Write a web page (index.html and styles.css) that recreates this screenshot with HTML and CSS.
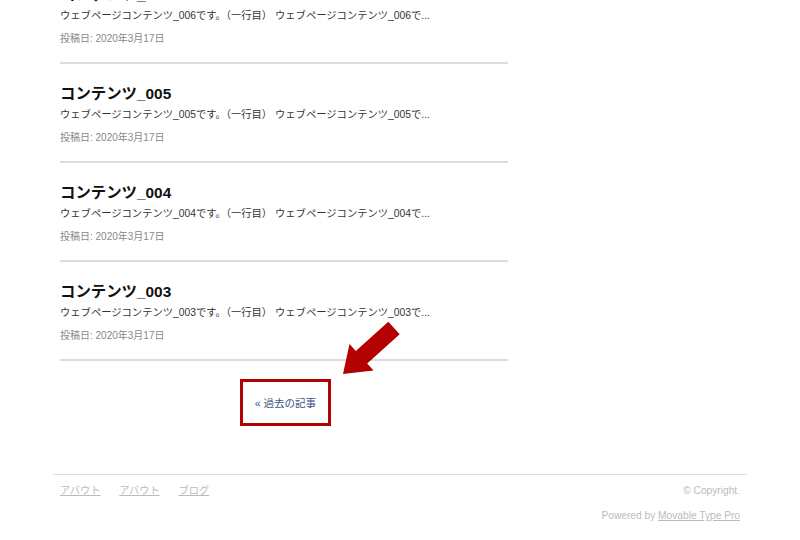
FILE: index.html
```html
<!DOCTYPE html>
<html lang="ja">
<head>
<meta charset="utf-8">
<title>コンテンツ一覧</title>
<link rel="stylesheet" href="styles.css">
</head>
<body>
<main class="main">
  <article class="entry">
    <h2 class="entry-title">コンテンツ_006</h2>
    <p class="entry-excerpt">ウェブページコンテンツ_006です。（一行目） ウェブページコンテンツ_006で...</p>
    <p class="entry-date">投稿日: 2020年3月17日</p>
  </article>
  <article class="entry">
    <h2 class="entry-title">コンテンツ_005</h2>
    <p class="entry-excerpt">ウェブページコンテンツ_005です。（一行目） ウェブページコンテンツ_005で...</p>
    <p class="entry-date">投稿日: 2020年3月17日</p>
  </article>
  <article class="entry">
    <h2 class="entry-title">コンテンツ_004</h2>
    <p class="entry-excerpt">ウェブページコンテンツ_004です。（一行目） ウェブページコンテンツ_004で...</p>
    <p class="entry-date">投稿日: 2020年3月17日</p>
  </article>
  <article class="entry">
    <h2 class="entry-title">コンテンツ_003</h2>
    <p class="entry-excerpt">ウェブページコンテンツ_003です。（一行目） ウェブページコンテンツ_003で...</p>
    <p class="entry-date">投稿日: 2020年3月17日</p>
  </article>
  <nav class="pager">
    <div class="pager-box"><a class="pager-link" href="#">« 過去の記事</a></div>
  </nav>
</main>
<footer class="footer">
  <div class="footer-row">
    <nav class="footer-links">
      <a href="#">アバウト</a>
      <a href="#">アバウト</a>
      <a href="#">ブログ</a>
    </nav>
    <span class="copyright">© Copyright.</span>
  </div>
  <div class="footer-powered">Powered by <a href="#">Movable Type Pro</a></div>
</footer>
<svg class="arrow" width="64" height="60" viewBox="0 0 64 60" aria-hidden="true">
  <polygon points="48.3,3.7 59.7,16.3 27.2,45.6 33.5,52.6 3,56 9.5,26 15.8,33" fill="#b30000"/>
</svg>
</body>
</html>
```

FILE: styles.css
```css
html, body {
  margin: 0;
  padding: 0;
  background: #fff;
}
body {
  font-family: "Liberation Sans", "Noto Sans CJK JP", sans-serif;
  color: #333;
  overflow: hidden;
}
.main {
  width: 448px;
  margin: -35px 0 0 60px;
}
.entry {
  padding: 20px 0 15px;
  border-bottom: 2px solid #dcdcdc;
}
.entry-title {
  margin: 0;
  font-size: 15.4px;
  line-height: 20px;
  font-weight: bold;
  color: #111;
}
.entry-excerpt {
  margin: 3px 0 0;
  font-size: 10.3px;
  line-height: 16px;
  color: #333;
  white-space: nowrap;
}
.entry-date {
  margin: 7px 0 0;
  font-size: 10px;
  line-height: 16px;
  color: #888;
}
.pager {
  display: flex;
  justify-content: center;
  margin-top: 18px;
  padding-left: 3px;
}
.pager-box {
  width: 85px;
  height: 41px;
  border: 3px solid #b30000;
  display: flex;
  align-items: center;
  justify-content: center;
}
.pager-link {
  font-size: 10.5px;
  color: #3a5683;
  text-decoration: none;
}
.footer {
  width: 680px;
  margin: 48px 0 0 53px;
  border-top: 1px solid #dcdcdc;
  padding: 8px 7px 0;
  font-size: 10.2px;
  line-height: 16px;
  color: #bbb;
}
.footer-row {
  display: flex;
  justify-content: space-between;
}
.footer-links {
  display: flex;
  gap: 19px;
}
.footer a {
  color: #bbb;
  text-decoration: underline;
}
.footer-powered {
  margin-top: 9px;
  text-align: right;
}
.arrow {
  position: absolute;
  left: 340px;
  top: 318px;
}
```
